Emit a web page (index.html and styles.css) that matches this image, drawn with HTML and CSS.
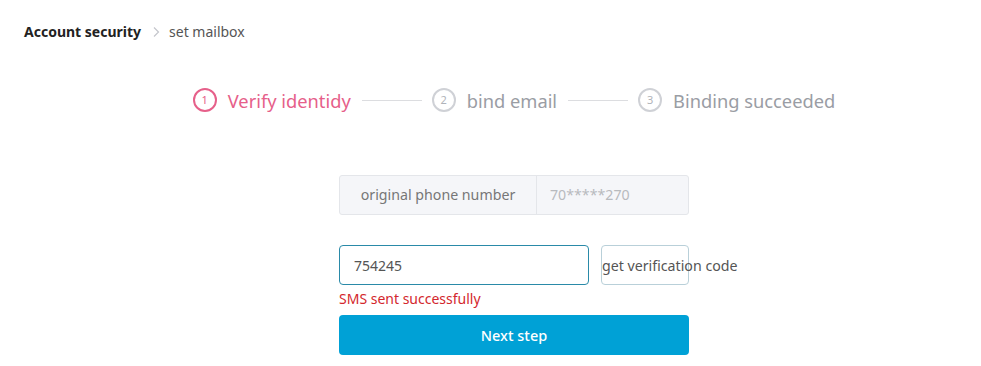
FILE: index.html
```html
<!DOCTYPE html>
<html lang="en">
<head>
<meta charset="utf-8">
<title>set mailbox</title>
<link rel="stylesheet" href="styles.css">
</head>
<body>
<div class="page">
  <div class="crumbs">
    <span class="crumb-main">Account security</span>
    <svg class="crumb-sep" width="8" height="12" viewBox="0 0 8 12"><path d="M2 1.5 L6.5 6 L2 10.5" fill="none" stroke="#c4c6cc" stroke-width="1.2"/></svg>
    <span class="crumb-sub">set mailbox</span>
  </div>
  <div class="content">
    <div class="steps">
      <div class="step active"><span class="num">1</span><span class="label">Verify identidy</span></div>
      <span class="line"></span>
      <div class="step"><span class="num">2</span><span class="label">bind email</span></div>
      <span class="line"></span>
      <div class="step"><span class="num">3</span><span class="label">Binding succeeded</span></div>
    </div>
    <div class="form">
      <div class="phone">
        <div class="phone-label">original phone number</div>
        <div class="phone-value">70*****270</div>
      </div>
      <div class="code-row">
        <input class="code-input" type="text" value="754245">
        <button class="code-btn">get verification code</button>
      </div>
      <div class="msg">SMS sent successfully</div>
      <button class="next">Next step</button>
    </div>
  </div>
</div>
</body>
</html>
```
FILE: styles.css
```css
html, body {
  margin: 0;
  padding: 0;
  background: #fff;
}
body {
  font-family: "Noto Sans", "Open Sans", sans-serif;
  color: #333;
}
.page {
  padding-left: 24px;
}
.crumbs {
  padding-top: 22px;
  height: 20px;
  display: flex;
  align-items: center;
  font-size: 14px;
  line-height: 20px;
}
.crumb-main {
  font-weight: 700;
  color: #222;
}
.crumb-sep {
  margin: 0 9px 0 11px;
}
.crumb-sub {
  color: #555;
}
.content {
  margin-left: 23px;
  display: flex;
  flex-direction: column;
  align-items: center;
}
.steps {
  margin-top: 43px;
  height: 30px;
  display: flex;
  align-items: center;
  font-size: 18.3px;
  color: #9a9da4;
}
.step {
  display: flex;
  align-items: center;
}
.num {
  width: 20px;
  height: 20px;
  border: 2px solid #cfd1d6;
  border-radius: 50%;
  font-size: 11px;
  line-height: 20px;
  text-align: center;
  color: #b0b3b9;
  margin-right: 11px;
}
.step.active {
  color: #e6608a;
}
.step.active .num {
  border-color: #e6608a;
  color: #e6608a;
}
.line {
  width: 60px;
  height: 1px;
  background: #dcdde0;
  margin: 0 10px 0 11px;
}
.form {
  margin-top: 60px;
  width: 350px;
  display: flex;
  flex-direction: column;
}
.phone {
  display: flex;
  height: 38px;
  border: 1px solid #e4e6ea;
  border-radius: 3px;
  background: #f5f6f9;
  font-size: 14.2px;
  line-height: 38px;
}
.phone-label {
  width: 196px;
  border-right: 1px solid #e4e6ea;
  text-align: center;
  color: #777;
}
.phone-value {
  padding-left: 13px;
  color: #b8babe;
}
.code-row {
  margin-top: 30px;
  display: flex;
  gap: 12px;
}
.code-input {
  box-sizing: border-box;
  width: 250px;
  height: 40px;
  border: 1px solid #2a8aa8;
  border-radius: 4px;
  padding: 0 14px;
  font-family: inherit;
  font-size: 14px;
  color: #555;
  outline: none;
}
.code-btn {
  box-sizing: border-box;
  width: 88px;
  height: 40px;
  border: 1px solid #b9d0d9;
  border-radius: 4px;
  background: #fff;
  padding: 0;
  font-family: inherit;
  font-size: 14.2px;
  color: #555;
  text-align: left;
  white-space: nowrap;
  overflow: visible;
}
.msg {
  margin-top: 4px;
  font-size: 14px;
  line-height: 20px;
  color: #d3272d;
}
.next {
  margin-top: 6px;
  height: 40px;
  border: none;
  border-radius: 4px;
  background: #00a1d6;
  color: #fff;
  font-family: inherit;
  font-size: 14.5px;
  font-weight: 500;
}
```
